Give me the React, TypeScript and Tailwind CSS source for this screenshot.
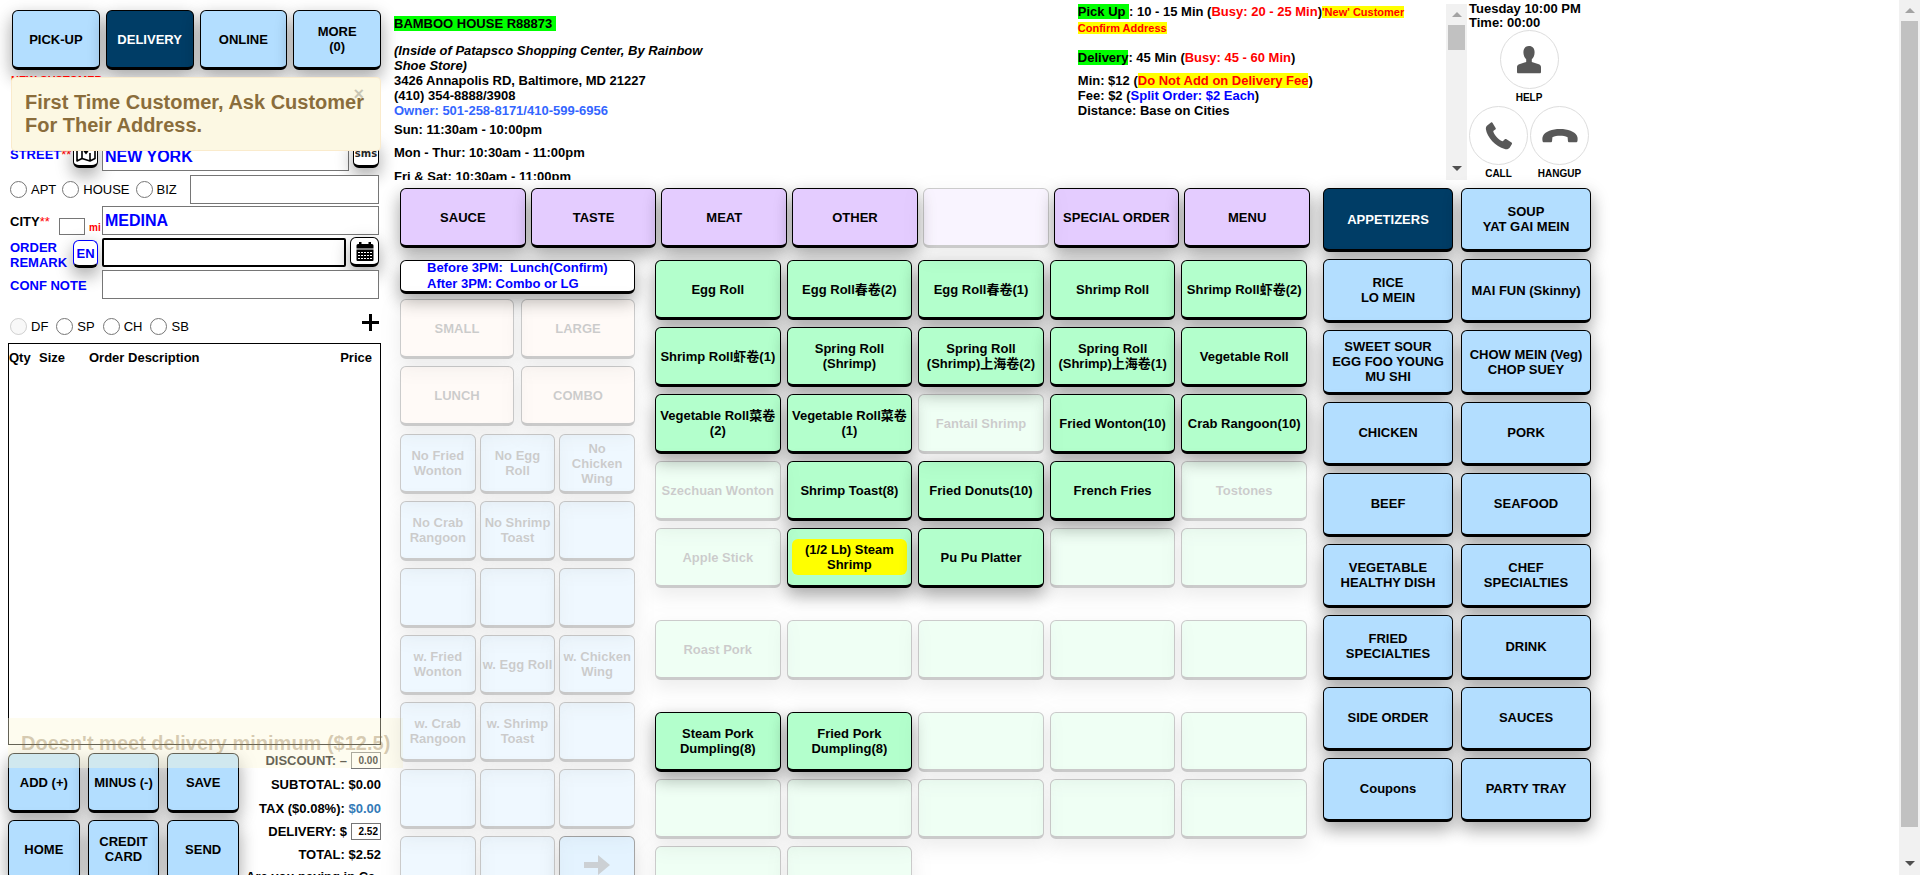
import type { ReactNode } from "react";

const FONT = "font-['Liberation_Sans','Noto_Sans_CJK_SC',sans-serif]";
const SHADOW = "shadow-[0_8px_16px_0_rgba(0,0,0,0.2),0_6px_20px_0_rgba(0,0,0,0.19)]";

const TONES = {
  blue: "bg-[#b3deff] text-black",
  navy: "bg-[#003d66] text-white",
  purple: "bg-[#e4ccff] text-black",
  green: "bg-[#b3ffcc] text-black",
  peach: "bg-[#ffe8d9] text-black",
};

type Tone = keyof typeof TONES;

function Key({
  tone,
  off = false,
  dim = "opacity-20",
  size = "h-[60px]",
  children,
}: {
  tone: Tone;
  off?: boolean;
  dim?: string;
  size?: string;
  children?: ReactNode;
}) {
  return (
    <button
      type="button"
      disabled={off}
      className={`flex min-w-0 w-full items-center justify-center rounded-md border border-b-3 border-black text-center text-[13px] leading-[15px] font-bold whitespace-pre-line ${size} ${TONES[tone]} ${SHADOW} ${off ? dim : ""}`}
    >
      {children}
    </button>
  );
}

const IconButton = ({ label, tone = "border-black text-black", size, children }: { label: string; tone?: string; size: string; children: ReactNode }) => (
  <button
    type="button"
    aria-label={label}
    className={`flex shrink-0 items-center justify-center rounded-md border border-b-3 bg-white ${tone} ${size} ${SHADOW}`}
  >
    {children}
  </button>
);

const MapIcon = () => (
  <svg viewBox="0 0 20 20" className="h-5 w-5" fill="none" stroke="currentColor" strokeWidth="1.6">
    <path d="M1 4.500 6 2.500v13l-5 2.500zM6 15.500l8 2.500 5-2.500v-13l-4 1.600M14 10v8" strokeLinejoin="round" />
    <path d="M10 1C7.700 1 6.300 2.700 6.300 4.700 6.300 7 10 11.500 10 11.500S13.700 7 13.700 4.700C13.700 2.700 12.300 1 10 1z" fill="currentColor" stroke="none" />
    <circle cx="10" cy="4.600" r="1.300" fill="#fff" stroke="none" />
  </svg>
);

const CalendarIcon = () => (
  <svg viewBox="0 0 18 19" className="h-[19px] w-[18px]" fill="currentColor">
    <path d="M2 2h14a1.500 1.500 0 0 1 1.500 1.500V6.500H.5V3.500A1.500 1.500 0 0 1 2 2z" />
    <path d="M3 0h2.500v3.500H3zM12.500 0H15v3.500h-2.500z" />
    <path d="M.5 7.500h17V18a1 1 0 0 1-1 1h-15a1 1 0 0 1-1-1z" />
    <path d="M2 10.500h14M2 13.500h14M2 16.500h14" stroke="#fff" strokeWidth="1" strokeDasharray="2 1" />
  </svg>
);

const UserIcon = () => (
  <svg viewBox="0 0 24 28" className="h-7 w-6" fill="#585858">
    <path d="M12 0c3.600 0 5.600 2.500 5.600 6.200 0 3-1.200 5.700-2.800 7V16l7 2.300c1.600.6 2.200 1.600 2.200 3.200V26c0 .8-.5 1.300-1.300 1.300H1.300C.5 27.300 0 26.800 0 26v-4.500c0-1.600.6-2.600 2.200-3.200l7-2.300v-2.800c-1.600-1.300-2.800-4-2.800-7C6.400 2.500 8.400 0 12 0z" />
  </svg>
);

const CallIcon = () => (
  <svg viewBox="0 0 28 28" className="h-7 w-7" fill="#585858">
    <path d="M2.500 3.200 6 .6c.6-.4 1.200-.3 1.600.3l3 5c.4.600.3 1.200-.3 1.600L8.200 9c.7 3.800 5.300 9 9.600 10.300l2-2c.5-.5 1.100-.5 1.700-.1l5 3.400c.6.4.7 1 .3 1.600l-2 3.200c-.9 1.500-3 2.100-5 1.600C10.500 24.600 2 15 .9 7.200.7 5.600 1.200 4.200 2.500 3.200z" />
  </svg>
);

const HangupIcon = () => (
  <svg viewBox="0 0 36 14" className="h-[14px] w-9" fill="#585858">
    <path d="M18 0c8 0 14.500 2.500 16.800 6.500.8 1.500 1 3 .7 5.200-.1 1-.7 1.600-1.700 1.600h-6.300c-1 0-1.500-.5-1.600-1.500l-.3-3.600C23.300 7.200 20.700 6.800 18 6.800s-5.300.4-7.600 1.400l-.3 3.600c-.1 1-.6 1.500-1.600 1.500H2.200c-1 0-1.600-.6-1.700-1.600-.3-2.200-.1-3.700.7-5.200C3.500 2.500 10 0 18 0z" />
  </svg>
);

function ScrollTrack({ thumb, size }: { thumb: string; size: string }) {
  return (
    <div aria-hidden="true" className={`flex w-[21px] shrink-0 flex-col items-center bg-[#f1f1f1] ${size}`}>
      <div className="flex h-[21px] shrink-0 items-center">
        <svg viewBox="0 0 10 5" className="h-[5px] w-[10px]"><path d="M0 5 5 0l5 5z" fill="#a3a3a3" /></svg>
      </div>
      <div className="w-full min-h-0 flex-1 px-0.5">
        <div className={`w-full bg-[#c1c1c1] ${thumb}`} />
      </div>
      <div className="flex h-[23px] shrink-0 items-center">
        <svg viewBox="0 0 10 5" className="h-[5px] w-[10px]"><path d="M0 0l5 5 5-5z" fill="#505050" /></svg>
      </div>
    </div>
  );
}

const FIELD = "h-[29px] min-w-0 flex-1 border border-[#767676] bg-white px-0.5 text-base font-bold text-[#0000ff]";

function Radio({ name, label, off = false }: { name: string; label: string; off?: boolean }) {
  return (
    <label className="flex items-center gap-1">
      <input type="radio" name={name} disabled={off} className="h-[17px] w-[17px]" />
      {label}
    </label>
  );
}

function OrderForm() {
  return (
    <form className="flex shrink-0 flex-col gap-0.5 pr-0.5 pl-0.5 text-[13px] leading-[15px]">
      <div className="flex h-[30px] items-start">
        <label htmlFor="street" className="w-[63px] pt-[5px] font-bold whitespace-nowrap text-[#0000ff]">
          STREET<span className="font-normal text-[#ff0000]">**</span>
        </label>
        <div className="-mt-0.5 mr-1"><IconButton label="Map" size="h-7 w-[25px]"><MapIcon /></IconButton></div>
        <input id="street" defaultValue="NEW YORK" className={FIELD} />
        <div className="-mt-0.5 ml-1">
          <IconButton label="Send text message" size="h-7 w-[26px]">
            <span className="font-['DejaVu_Sans'] text-[10px] font-bold text-neutral-800">sms</span>
          </IconButton>
        </div>
      </div>
      <div className="flex h-[30px] items-center">
        <div className="flex w-[180px] gap-1.5">
          <Radio name="place" label="APT" />
          <Radio name="place" label="HOUSE" />
          <Radio name="place" label="BIZ" />
        </div>
        <input aria-label="Unit" className={FIELD} />
      </div>
      <div className="flex h-[30px] items-start">
        <label htmlFor="city" className="w-[49px] pt-2 font-bold">
          CITY<span className="font-normal text-[#ff0000]">**</span>
        </label>
        <input id="miles" className="mt-3 h-[17px] w-[26px] border border-[#767676]" />
        <label htmlFor="miles" className="w-[17px] pt-3.5 pl-1 text-[10px] font-bold text-[#ff0000]">mi</label>
        <input id="city" defaultValue="MEDINA" className={FIELD} />
      </div>
      <div className="flex h-[30px] items-start">
        <label htmlFor="remark" className="w-[63px] pt-0.5 font-bold text-[#0000ff]">ORDER REMARK</label>
        <div className="mt-0.5 mr-1">
          <IconButton label="Language" tone="border-[#0000ff] border-b-black text-[#0000ff]" size="h-7 w-[25px]">
            <span className="font-bold">EN</span>
          </IconButton>
        </div>
        <input id="remark" autoFocus className="h-[29px] min-w-0 flex-1 rounded-xs border-2 border-black bg-white px-0.5 text-base font-bold text-[#0000ff] outline-none" />
        <div className="-mt-px ml-1"><IconButton label="Calendar" size="h-[30px] w-[29px]"><CalendarIcon /></IconButton></div>
      </div>
      <div className="flex h-[30px] items-start">
        <label htmlFor="conf" className="w-[92px] pt-2 font-bold text-[#0000ff]">CONF NOTE</label>
        <input id="conf" className={FIELD} />
      </div>
      <div className="flex h-[41px] items-center justify-between pt-2">
        <div className="flex gap-2">
          <Radio name="kind" label="DF" off />
          <Radio name="kind" label="SP" />
          <Radio name="kind" label="CH" />
          <Radio name="kind" label="SB" />
        </div>
        <button type="button" aria-label="Add line" className="mb-2">
          <svg viewBox="0 0 17 17" className="h-[17px] w-[17px]"><path d="M8.500 0v17M0 8.500h17" stroke="#000" strokeWidth="3" /></svg>
        </button>
      </div>
    </form>
  );
}

const Money = ({ id, value }: { id: string; value: string }) => (
  <input id={id} defaultValue={value} className="ml-1 h-[17px] w-[30px] border border-[#767676] bg-white pr-0.5 text-right text-[10px] font-bold" />
);

function Sidebar() {
  return (
    <aside className="relative flex h-full w-[381px] shrink-0 flex-col pl-2">
      <nav className="grid shrink-0 grid-cols-4 gap-1.5 pt-2.5 pl-1">
        <Key tone="blue">PICK-UP</Key>
        <Key tone="navy">DELIVERY</Key>
        <Key tone="blue">ONLINE</Key>
        <Key tone="blue">{"MORE\n(0)"}</Key>
      </nav>
      <p className="h-[72px] shrink-0 pt-[2px] pl-[3px] text-[11px] leading-4 font-bold text-[#ff0000]">NEW CUSTOMER</p>
      <OrderForm />
      <div className="h-[402px] shrink-0 border border-black">
        <table className="w-full text-left text-[13px] leading-[15px]">
          <thead>
            <tr>
              <th className="w-[30px] pt-1.5">Qty</th>
              <th className="w-[50px] pt-1.5">Size</th>
              <th className="pt-1.5">Order Description</th>
              <th className="pt-1.5 pr-2 text-right">Price</th>
            </tr>
          </thead>
        </table>
      </div>
      <div className="flex shrink-0">
        <div className="mt-2 grid w-[231px] grid-cols-3 content-start gap-x-2 gap-y-[7px]">
          {["ADD (+)", "MINUS (-)", "SAVE", "HOME", "CREDIT CARD", "SEND"].map((t) => (
            <Key key={t} tone="blue">{t}</Key>
          ))}
        </div>
        <div className="flex flex-1 flex-col pt-[3px] text-[13px] leading-[15px] font-bold whitespace-nowrap">
          <div className="flex h-6 shrink-0 items-center justify-end"><label htmlFor="discount">DISCOUNT: –</label><Money id="discount" value="0.00" /></div>
          <div className="flex h-6 shrink-0 items-center justify-end">SUBTOTAL: $0.00</div>
          <div className="flex h-6 shrink-0 items-center justify-end">TAX ($0.08%):&nbsp;<span className="text-[#337ab7]">$0.00</span></div>
          <div className="flex h-[22px] shrink-0 items-center justify-end"><label htmlFor="fee">DELIVERY: $</label><Money id="fee" value="2.52" /></div>
          <div className="flex h-6 shrink-0 items-center justify-end">TOTAL: $2.52</div>
          <div className="flex h-5 shrink-0 items-center pl-[7px]">Are you paying in Ca</div>
        </div>
      </div>
      <div role="alert" className="absolute top-[77px] right-0 left-[11px] rounded border border-[#faebcc] bg-[#fcf8e3] px-[13px] py-[13px] text-[20px] leading-[23px] font-bold text-[#8a6d3b]">
        First Time Customer, Ask Customer For Their Address.
        <button type="button" aria-label="Close" className="absolute top-1.5 right-4 text-[18px] leading-5 text-black opacity-20">×</button>
      </div>
      <div role="alert" className="absolute top-[718px] left-2 h-[50px] bg-[#fcf8d8]/40 px-[13px] pt-[14px] text-[20px] leading-[23px] font-bold whitespace-nowrap text-[#8a6d3b]/35">
        Doesn't meet delivery minimum ($12.5)
      </div>
    </aside>
  );
}

const Lime = ({ children }: { children: ReactNode }) => <mark className="bg-[#00ff00] text-black">{children}</mark>;

function StoreInfo() {
  return (
    <div className="flex h-44 min-w-0 flex-1 overflow-hidden pl-px text-[13px] leading-[15px] font-bold">
      <div className="w-[65%] pt-3">
        <h1 className="pb-3"><Lime>BAMBOO HOUSE R88873&nbsp;</Lime></h1>
        <address className="max-w-[342px] not-italic">
          <i>(Inside of Patapsco Shopping Center, By Rainbow Shoe Store)</i>
          <br />3426 Annapolis RD, Baltimore, MD 21227
          <br />(410) 354-8888/3908
          <br /><span className="text-[#3366ff]">Owner: 501-258-8171/410-599-6956</span>
        </address>
        <p className="pt-1">Sun: 11:30am - 10:00pm</p>
        <p className="pt-2">Mon - Thur: 10:30am - 11:00pm</p>
        <p className="pt-[9px]">Fri &amp; Sat: 10:30am - 11:00pm</p>
      </div>
      <div className="flex-1">
        <p>
          <Lime>Pick Up </Lime>: 10 - 15 Min (<span className="text-[#ff0000]">Busy: 20 - 25 Min</span>)
          <mark className="bg-[#ffff00] text-[11px] text-[#ff0000]">'New' Customer Confirm Address</mark>
        </p>
        <p className="pt-3.5">
          <Lime>Delivery</Lime>: 45 Min (<span className="text-[#ff0000]">Busy: 45 - 60 Min</span>)
        </p>
        <p className="pt-2">
          Min: $12 (<mark className="bg-[#ffff00] text-[#ff0000]">Do Not Add on Delivery Fee</mark>)
          <br />Fee: $2 (<span className="text-[#0000ff]">Split Order: $2 Each</span>)
          <br />Distance: Base on Cities
        </p>
      </div>
    </div>
  );
}

const PhoneKey = ({ label, children }: { label: string; children: ReactNode }) => (
  <button type="button" className="flex flex-col items-center text-[10px] leading-[17px] font-bold">
    <span className="flex h-[59px] w-[59px] items-center justify-center rounded-full border border-[#dddddd] bg-white">{children}</span>
    {label}
  </button>
);

const PhonePanel = () => (
  <div className="flex w-[124px] shrink-0 flex-col items-center pt-0.5">
    <p className="w-full pl-0.5 text-[13px] leading-[14px] font-bold">Tuesday 10:00 PM<br />Time: 00:00</p>
    <PhoneKey label="HELP"><UserIcon /></PhoneKey>
    <div className="flex gap-0.5">
      <PhoneKey label="CALL"><CallIcon /></PhoneKey>
      <PhoneKey label="HANGUP"><HangupIcon /></PhoneKey>
    </div>
  </div>
);

const HEADS = ["SAUCE", "TASTE", "MEAT", "OTHER", "", "SPECIAL ORDER", "MENU"];

const NOTES = [
  "No Fried Wonton", "No Egg\nRoll", "No\nChicken\nWing",
  "No Crab Rangoon", "No Shrimp Toast", "",
  "", "", "",
  "w. Fried Wonton", "w. Egg Roll", "w. Chicken Wing",
  "w. Crab Rangoon", "w. Shrimp Toast", "",
  "", "", "",
  "", "",
];

// A leading "-" marks a dish that is not on sale, a leading "*" one to highlight.
const DISHES = [
  [
    "Egg Roll", "Egg Roll春卷(2)", "Egg Roll春卷(1)", "Shrimp Roll", "Shrimp Roll虾卷(2)",
    "Shrimp Roll虾卷(1)", "Spring Roll\n(Shrimp)", "Spring Roll\n(Shrimp)上海卷(2)", "Spring Roll\n(Shrimp)上海卷(1)", "Vegetable Roll",
    "Vegetable Roll菜卷\n(2)", "Vegetable Roll菜卷\n(1)", "-Fantail Shrimp", "Fried Wonton(10)", "Crab Rangoon(10)",
    "-Szechuan Wonton", "Shrimp Toast(8)", "Fried Donuts(10)", "French Fries", "-Tostones",
    "-Apple Stick", "*(1/2 Lb) Steam Shrimp", "Pu Pu Platter", "-", "-",
  ],
  ["-Roast Pork", "-", "-", "-", "-"],
  ["Steam Pork\nDumpling(8)", "Fried Pork\nDumpling(8)", "-", "-", "-", "-", "-", "-", "-", "-", "-", "-"],
];

const CATEGORIES = [
  "APPETIZERS", "SOUP\nYAT GAI MEIN", "RICE\nLO MEIN", "MAI FUN (Skinny)",
  "SWEET SOUR\nEGG FOO YOUNG\nMU SHI", "CHOW MEIN (Veg)\nCHOP SUEY", "CHICKEN", "PORK",
  "BEEF", "SEAFOOD", "VEGETABLE\nHEALTHY DISH", "CHEF\nSPECIALTIES",
  "FRIED\nSPECIALTIES", "DRINK", "SIDE ORDER", "SAUCES", "Coupons", "PARTY TRAY",
];

function Options() {
  return (
    <div className="w-[235px] shrink-0">
      <button type="button" className={`flex h-[34px] w-full items-center rounded-md border border-b-3 border-black bg-white pl-[26px] text-left text-[13px] leading-4 font-bold whitespace-pre text-[#0000ff] ${SHADOW}`}>
        {"Before 3PM:  Lunch(Confirm)\nAfter 3PM: Combo or LG"}
      </button>
      <div className="mt-[5px] grid grid-cols-2 gap-[7px]">
        {["SMALL", "LARGE", "LUNCH", "COMBO"].map((t) => <Key key={t} tone="peach" off>{t}</Key>)}
      </div>
      <div className="mt-2 grid grid-cols-3 gap-x-1 gap-y-[7px]">
        {NOTES.map((t, i) => <Key key={i} tone="blue" off>{t}</Key>)}
        <Key tone="blue" off dim="opacity-35">
          <svg viewBox="0 0 26 20" className="h-5 w-[26px]" fill="#6e7c86"><path d="M0 7h14V0l12 10-12 10v-7H0z" /></svg>
        </Key>
      </div>
    </div>
  );
}

const Dish = ({ text }: { text: string }) => {
  if (text.startsWith("-")) return <Key tone="green" off>{text.slice(1)}</Key>;
  if (text.startsWith("*"))
    return (
      <Key tone="green">
        <span className="mx-1 rounded-md bg-[#ffff00] px-2 py-[3px]">{text.slice(1)}</span>
      </Key>
    );
  return <Key tone="green">{text}</Key>;
};

export default function App() {
  return (
    <div className={`flex h-screen overflow-hidden bg-white text-black ${FONT}`}>
      <div className="min-w-0 flex-1 overflow-hidden">
        <div className="flex h-full max-w-[1591px]">
          <Sidebar />
          <main className="min-w-0 flex-1 pl-3">
            <header className="flex h-[180px] items-start">
              <div className="flex min-w-0 flex-1 pt-1">
                <StoreInfo />
                <ScrollTrack size="h-44" thumb="h-[25px]" />
              </div>
              <PhonePanel />
            </header>
            <div className="flex gap-[13px] pt-2 pl-[7px]">
              <div className="min-w-0 flex-1">
                <nav className="grid grid-cols-7 gap-[5px]">
                  {HEADS.map((t, i) => <Key key={i} tone="purple" off={!t}>{t}</Key>)}
                </nav>
                <div className="flex gap-5 pt-3 pr-[3px]">
                  <Options />
                  <div className="flex min-w-0 flex-1 flex-col gap-8">
                    {DISHES.map((group, g) => (
                      <div key={g} className="grid grid-cols-5 gap-x-1.5 gap-y-[7px]">
                        {group.map((t, i) => <Dish key={i} text={t} />)}
                      </div>
                    ))}
                  </div>
                </div>
              </div>
              <nav className="grid min-h-[634px] w-[268px] shrink-0 auto-rows-fr grid-cols-2 gap-x-2 gap-y-[7px] self-start">
                {CATEGORIES.map((t, i) => <Key key={t} tone={i ? "blue" : "navy"} size="h-full">{t}</Key>)}
              </nav>
            </div>
          </main>
        </div>
      </div>
      <ScrollTrack size="h-full" thumb="h-[97%]" />
    </div>
  );
}
